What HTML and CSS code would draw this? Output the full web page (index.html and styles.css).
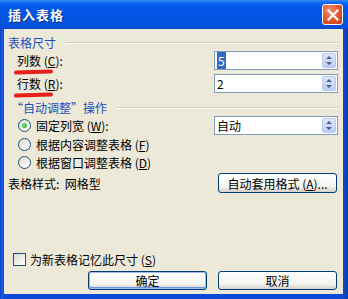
FILE: index.html
```html
<!DOCTYPE html>
<html lang="zh-CN">
<head>
    <meta charset="UTF-8">
    <title>插入表格</title>
    <link rel="stylesheet" href="styles.css">
</head>
<body>
    <div class="window">
        <div class="titlebar">
            <span class="title">插入表格</span>
            <span class="close">
                <svg width="12" height="12" viewBox="0 0 12 12"><path d="M1.5 1.5 L10.5 10.5 M10.5 1.5 L1.5 10.5" stroke="#fff" stroke-width="2.2" stroke-linecap="square"/></svg>
            </span>
        </div>
        <div class="content">
            <div class="group-head head-size">
                <span>表格尺寸</span><span class="rule"></span>
            </div>
            <div class="row row-cols">
                <label class="field-label"><span class="marked">列数</span> (<u>C</u>):</label>
                <div class="spin"><span class="value selected">5</span><span class="spin-btn"></span></div>
            </div>
            <div class="row row-rows">
                <label class="field-label"><span class="marked">行数</span> (<u>R</u>):</label>
                <div class="spin"><span class="value">2</span><span class="spin-btn"></span></div>
            </div>
            <div class="group-head head-fit">
                <span>“自动调整”操作</span><span class="rule"></span>
            </div>
            <div class="row radio-row first">
                <span class="radio checked"></span>
                <span class="radio-text">固定列宽 (<u>W</u>):</span>
                <div class="spin"><span class="value">自动</span><span class="spin-btn"></span></div>
            </div>
            <div class="row radio-row">
                <span class="radio"></span>
                <span class="radio-text">根据内容调整表格 (<u>F</u>)</span>
            </div>
            <div class="row radio-row">
                <span class="radio"></span>
                <span class="radio-text">根据窗口调整表格 (<u>D</u>)</span>
            </div>
            <div class="row style-row">
                <span class="style-text">表格样式:&nbsp;&nbsp;网格型</span>
                <button type="button" class="btn">自动套用格式 (<u>A</u>)...</button>
            </div>
            <div class="spacer"></div>
            <div class="row check-row">
                <span class="checkbox"></span>
                <span>为新表格记忆此尺寸 (<u>S</u>)</span>
            </div>
            <div class="row button-row">
                <button type="button" class="btn default">确定</button>
                <button type="button" class="btn">取消</button>
            </div>
        </div>
    </div>
</body>
</html>
```

FILE: styles.css
```css
html, body {
    margin: 0;
    padding: 0;
}
body {
    font-family: "Noto Sans CJK SC", "DejaVu Sans", sans-serif;
    font-size: 12px;
    color: #000;
    background: #0842c8;
}
.window {
    width: 348px;
    height: 299px;
    box-sizing: border-box;
    display: flex;
    flex-direction: column;
    background: linear-gradient(to right, #0a3fc4 0, #1a5ee8 2px, #0b4ad6 4px, #0b4ad6 calc(100% - 5px), #0a3aa8 100%);
    padding: 0 5px 5px 4px;
}
.titlebar {
    height: 29px;
    margin: 0 -5px 0 -4px;
    padding: 0 5px 0 8px;
    display: flex;
    align-items: center;
    justify-content: space-between;
    background: linear-gradient(to bottom, #3a8cf6 0, #0a64ec 3px, #0458e8 8px, #0454e4 20px, #0650d6 27px, #0a48c8 29px);
}
.title {
    color: #fff;
    font-weight: bold;
    font-size: 13px;
    text-shadow: 1px 1px 0 #0a2a80;
    letter-spacing: 1px;
}
.close {
    width: 19px;
    height: 19px;
    margin-right: 0;
    border: 1px solid #fff;
    border-radius: 3px;
    background: radial-gradient(circle at 35% 30%, #f0906c 0, #e0542c 55%, #c43c18 100%);
    display: flex;
    align-items: center;
    justify-content: center;
}
.content {
    flex: 1;
    background: #ece9d8;
    padding: 0 5px 0 4px;
    display: flex;
    flex-direction: column;
}
.group-head {
    display: flex;
    align-items: center;
    height: 14px;
    color: #1f4fb8;
}
.head-size {
    margin-top: 6px;
}
.head-fit {
    margin-top: 7px;
    padding-left: 3px;
}
.rule {
    flex: 1;
    margin-left: 10px;
    margin-top: 1px;
    border-top: 1px solid #d0d0bf;
    border-bottom: 1px solid #fff;
}
.row {
    display: flex;
    align-items: center;
}
.row-cols {
    margin-top: 2px;
    height: 19px;
}
.row-rows {
    margin-top: 4px;
    height: 19px;
}
.field-label {
    margin-left: 9px;
    flex: 1;
}
.marked {
    position: relative;
}
.marked::after {
    content: "";
    position: absolute;
    left: -3px;
    right: -12px;
    bottom: -5px;
    height: 4px;
    border-radius: 3px;
    background: #e8201c;
    transform: rotate(-2deg);
}
.spin {
    width: 120px;
    height: 17px;
    border: 1px solid #7f9db9;
    background: #fff;
    display: flex;
    align-items: center;
    justify-content: space-between;
    padding-left: 2px;
}
.value.selected {
    background: #316ac5;
    color: #fff;
    padding: 0 1px;
}
.spin-btn {
    width: 14px;
    height: 15px;
    margin-right: 1px;
    border-radius: 2px;
    background:
        url("data:image/svg+xml,%3Csvg xmlns='http://www.w3.org/2000/svg' width='14' height='15'%3E%3Cpath d='M4 6 L7 3 L10 6 Z M4 9 L7 12 L10 9 Z' fill='%234d6185'/%3E%3C/svg%3E") no-repeat center,
        linear-gradient(to bottom, #dce6fb, #bccef6);
    border: 1px solid #b9c9ef;
    box-sizing: border-box;
}
.radio-row {
    height: 18px;
    padding-left: 10px;
}
.radio-row.first {
    margin-top: 2px;
    height: 19px;
}
.radio-row.first .radio-text {
    flex: 1;
}
.radio {
    width: 11px;
    height: 11px;
    border: 1px solid #1c5180;
    border-radius: 50%;
    background: linear-gradient(135deg, #dcdcd4, #fff);
    margin-right: 5px;
    display: flex;
    align-items: center;
    justify-content: center;
}
.radio.checked::after {
    content: "";
    width: 5px;
    height: 5px;
    border-radius: 50%;
    background: radial-gradient(circle at 40% 40%, #7be27b, #21a121);
}
.style-row {
    margin-top: 2px;
    height: 20px;
    justify-content: space-between;
}
.btn {
    font-family: inherit;
    font-size: 12px;
    width: 119px;
    height: 20px;
    padding: 0;
    border: 1px solid #003c74;
    border-radius: 3px;
    background: linear-gradient(to bottom, #fff, #f3f3ef 70%, #d6d0c5);
    color: #000;
}
.style-row .btn {
    margin-right: 1px;
}
.spacer {
    flex: 1;
}
.check-row {
    height: 14px;
    padding-left: 5px;
}
.checkbox {
    width: 11px;
    height: 11px;
    border: 1px solid #1c5180;
    background: linear-gradient(135deg, #dcdcd4, #fff);
    margin-right: 4px;
}
.button-row {
    margin-top: 5px;
    margin-bottom: 4px;
    justify-content: flex-end;
    gap: 10px;
}
.button-row .btn {
    height: 19px;
    margin-right: 1px;
}
.btn.default {
    box-shadow: inset 0 0 0 1px #9cbaf4, inset 0 -1px 0 1px #6c96e8;
}
u {
    text-decoration: underline;
}
```
